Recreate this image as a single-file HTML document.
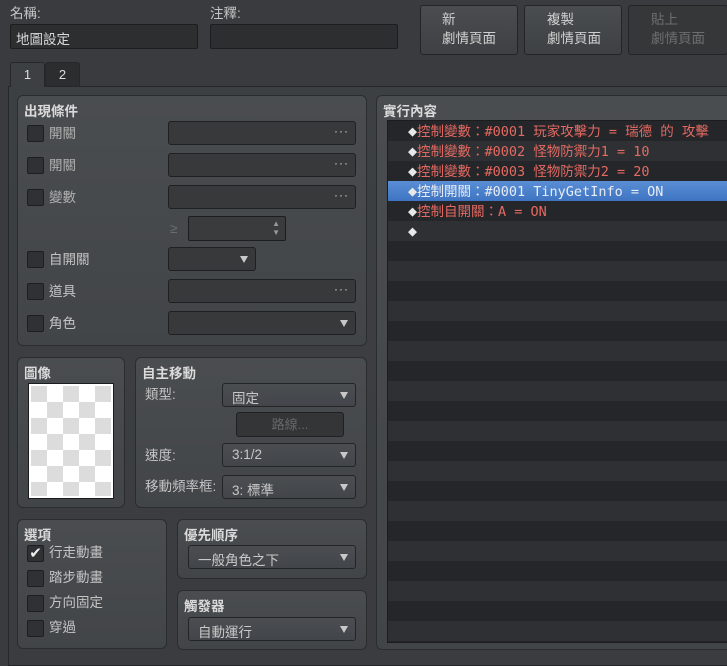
<!DOCTYPE html>
<html><head><meta charset="utf-8">
<style>
*{box-sizing:border-box;margin:0;padding:0}
body{width:727px;height:654px;overflow:hidden;background:#393b3e;font-family:"Liberation Sans","Noto Sans CJK TC",sans-serif;font-size:13px;color:#cfcfcf;position:relative}
.a{position:absolute}
.lbl{position:absolute;font-size:13.5px;color:#c4c4c4;line-height:16px}
.inp{position:absolute;background:#2c2e30;border:1px solid #1c1d1f;border-radius:2px}
.btn{position:absolute;background:linear-gradient(#4a4d50,#3e4143);border:1px solid #222426;border-radius:3px;color:#d0d0d0;font-size:13.5px;line-height:19px;padding:4px 0 0 26px}
.pane{position:absolute;left:8px;top:86px;width:730px;height:580px;background:linear-gradient(#3d4043,#3a3c3f);border:1px solid #25272a}
.panel{position:absolute;background:linear-gradient(#4a4d50,#424548);border:1px solid #2a2c2e;border-radius:6px}
.pt{position:absolute;left:6px;top:4px;font-size:13.5px;font-weight:bold;color:#dadada}
.cb{position:absolute;width:17px;height:17px;background:#2f3133;border:1px solid #1d1e20;border-radius:2px}
.fld{position:absolute;background:#38393b;border:1px solid #1f2022;border-radius:3px;height:24px}
.cmb{position:absolute;background:linear-gradient(#4b4e51,#42454a);border:1px solid #222426;border-radius:3px;height:24px;color:#c8c8c8;padding:3px 0 0 9px;font-size:13.5px}
.dots{position:absolute;right:6px;top:2px;color:#cfcfcf;font-size:12px;letter-spacing:1px}
.arr{position:absolute;right:7px;top:8px;width:0;height:0;border-left:4px solid transparent;border-right:4px solid transparent;border-top:7px solid #c8c8c8}
.row{position:absolute;left:0;width:340px;height:20px;font-family:"DejaVu Sans Mono","Liberation Mono","Noto Sans CJK TC",monospace;font-size:13.5px;line-height:20px;color:#e46a62;padding-left:20px;white-space:nowrap}
.row b{color:#e8e8e8;font-weight:normal;font-size:15px}
.ck{position:absolute;width:16px;height:16px;background:#dcdcdc}
</style></head><body>
<div class="lbl" style="left:10px;top:6px">名稱:</div>
<div class="inp" style="left:10px;top:24px;width:188px;height:25px;padding:3px 5px;color:#dadada;font-size:13.5px">地圖設定</div>
<div class="lbl" style="left:210px;top:6px">注釋:</div>
<div class="inp" style="left:210px;top:24px;width:188px;height:25px"></div>
<div class="btn" style="left:420px;top:5px;width:98px;height:50px;padding-left:21px">新<br>劇情頁面</div>
<div class="btn" style="left:524px;top:5px;width:98px;height:50px;padding-left:22px">複製<br>劇情頁面</div>
<div class="btn" style="left:628px;top:5px;width:100px;height:50px;padding-left:22px;background:#353739;color:#6c6e70">貼上<br>劇情頁面</div>

<div class="pane"></div>
<div class="a" style="left:10px;top:62px;width:35px;height:25px;background:#3d4043;border:1px solid #25272a;border-bottom:none;border-radius:3px 3px 0 0;color:#ddd;text-align:center;line-height:24px">1</div>
<div class="a" style="left:45px;top:62px;width:35px;height:24px;background:#2b2d2f;border:1px solid #25272a;border-bottom:none;border-radius:3px 3px 0 0;color:#ddd;text-align:center;line-height:24px">2</div>

<div class="panel" style="left:17px;top:95px;width:350px;height:251px">
<div class="pt">出現條件</div></div>
<div class="cb" style="left:27px;top:125px"></div><div class="lbl" style="left:49px;top:126px;color:#b0b0b0">開關</div>
<div class="fld" style="left:168px;top:121px;width:188px"><span class="dots">···</span></div>
<div class="cb" style="left:27px;top:157px"></div><div class="lbl" style="left:49px;top:158px;color:#b0b0b0">開關</div>
<div class="fld" style="left:168px;top:153px;width:188px"><span class="dots">···</span></div>
<div class="cb" style="left:27px;top:189px"></div><div class="lbl" style="left:49px;top:190px;color:#b0b0b0">變數</div>
<div class="fld" style="left:168px;top:185px;width:188px"><span class="dots">···</span></div>
<div class="lbl" style="left:170px;top:221px;color:#6a6c6e">≥</div>
<div class="inp" style="left:188px;top:216px;width:98px;height:25px;background:#3a3b3d"><span class="a" style="right:5px;top:2px;font-size:8px;line-height:9px;color:#999">▲<br>▼</span></div>
<div class="cb" style="left:27px;top:251px"></div><div class="lbl" style="left:49px;top:252px">自開關</div>
<div class="fld" style="left:168px;top:247px;width:88px"><span class="arr"></span></div>
<div class="cb" style="left:27px;top:283px"></div><div class="lbl" style="left:49px;top:284px">道具</div>
<div class="fld" style="left:168px;top:279px;width:188px"><span class="dots">···</span></div>
<div class="cb" style="left:27px;top:315px"></div><div class="lbl" style="left:49px;top:316px">角色</div>
<div class="fld" style="left:168px;top:311px;width:188px"><span class="arr"></span></div>

<div class="panel" style="left:17px;top:357px;width:108px;height:151px"><div class="pt">圖像</div></div>
<div class="a" style="left:28px;top:383px;width:86px;height:116px;border:1px solid #1b1c1e;background:#fff;padding:2px">
<div style="position:relative;width:80px;height:110px;overflow:hidden">
<div class="ck" style="left:0;top:0"></div><div class="ck" style="left:32px;top:0"></div><div class="ck" style="left:64px;top:0"></div>
<div class="ck" style="left:16px;top:16px"></div><div class="ck" style="left:48px;top:16px"></div>
<div class="ck" style="left:0;top:32px"></div><div class="ck" style="left:32px;top:32px"></div><div class="ck" style="left:64px;top:32px"></div>
<div class="ck" style="left:16px;top:48px"></div><div class="ck" style="left:48px;top:48px"></div>
<div class="ck" style="left:0;top:64px"></div><div class="ck" style="left:32px;top:64px"></div><div class="ck" style="left:64px;top:64px"></div>
<div class="ck" style="left:16px;top:80px"></div><div class="ck" style="left:48px;top:80px"></div>
<div class="ck" style="left:0;top:96px"></div><div class="ck" style="left:32px;top:96px"></div><div class="ck" style="left:64px;top:96px"></div>
</div></div>

<div class="panel" style="left:135px;top:357px;width:232px;height:151px"><div class="pt">自主移動</div></div>
<div class="lbl" style="left:145px;top:387px">類型:</div>
<div class="cmb" style="left:222px;top:383px;width:134px">固定<span class="arr"></span></div>
<div class="a" style="left:236px;top:412px;width:108px;height:25px;background:#333537;border:1px solid #1f2022;border-radius:3px;color:#66686a;text-align:center;line-height:23px">路線...</div>
<div class="lbl" style="left:145px;top:448px">速度:</div>
<div class="cmb" style="left:222px;top:443px;width:134px">3:1/2<span class="arr"></span></div>
<div class="lbl" style="left:145px;top:479px">移動頻率框:</div>
<div class="cmb" style="left:222px;top:475px;width:134px">3: 標準<span class="arr"></span></div>

<div class="panel" style="left:17px;top:519px;width:150px;height:130px"><div class="pt">選項</div></div>
<div class="cb" style="left:27px;top:545px;color:#eee;font-size:15px;line-height:15px;text-align:center">✔</div><div class="lbl" style="left:49px;top:545px">行走動畫</div>
<div class="cb" style="left:27px;top:570px"></div><div class="lbl" style="left:49px;top:570px">踏步動畫</div>
<div class="cb" style="left:27px;top:595px"></div><div class="lbl" style="left:49px;top:595px">方向固定</div>
<div class="cb" style="left:27px;top:620px"></div><div class="lbl" style="left:49px;top:620px">穿過</div>

<div class="panel" style="left:177px;top:519px;width:190px;height:60px"><div class="pt">優先順序</div></div>
<div class="cmb" style="left:188px;top:545px;width:168px">一般角色之下<span class="arr"></span></div>
<div class="panel" style="left:177px;top:590px;width:190px;height:60px"><div class="pt">觸發器</div></div>
<div class="cmb" style="left:188px;top:617px;width:168px">自動運行<span class="arr"></span></div>

<div class="panel" style="left:376px;top:95px;width:360px;height:555px"><div class="pt">實行內容</div></div>
<div class="a" style="left:387px;top:120px;width:345px;height:523px;border:1px solid #1b1c1e;background:repeating-linear-gradient(#25262a 0 20px,#2e3033 20px 40px);overflow:hidden">
<div class="row" style="top:0"><b>◆</b>控制變數：#0001 玩家攻擊力 = 瑞德 的 攻擊</div>
<div class="row" style="top:20px"><b>◆</b>控制變數：#0002 怪物防禦力1 = 10</div>
<div class="row" style="top:40px"><b>◆</b>控制變數：#0003 怪物防禦力2 = 20</div>
<div class="row" style="top:60px;background:linear-gradient(#5a8ed6,#3e74c2);color:#e8ecf4;width:345px"><b>◆</b>控制開關：#0001 TinyGetInfo = ON</div>
<div class="row" style="top:80px"><b>◆</b>控制自開關：A = ON</div>
<div class="row" style="top:100px"><b>◆</b></div>
</div>
</body></html>
